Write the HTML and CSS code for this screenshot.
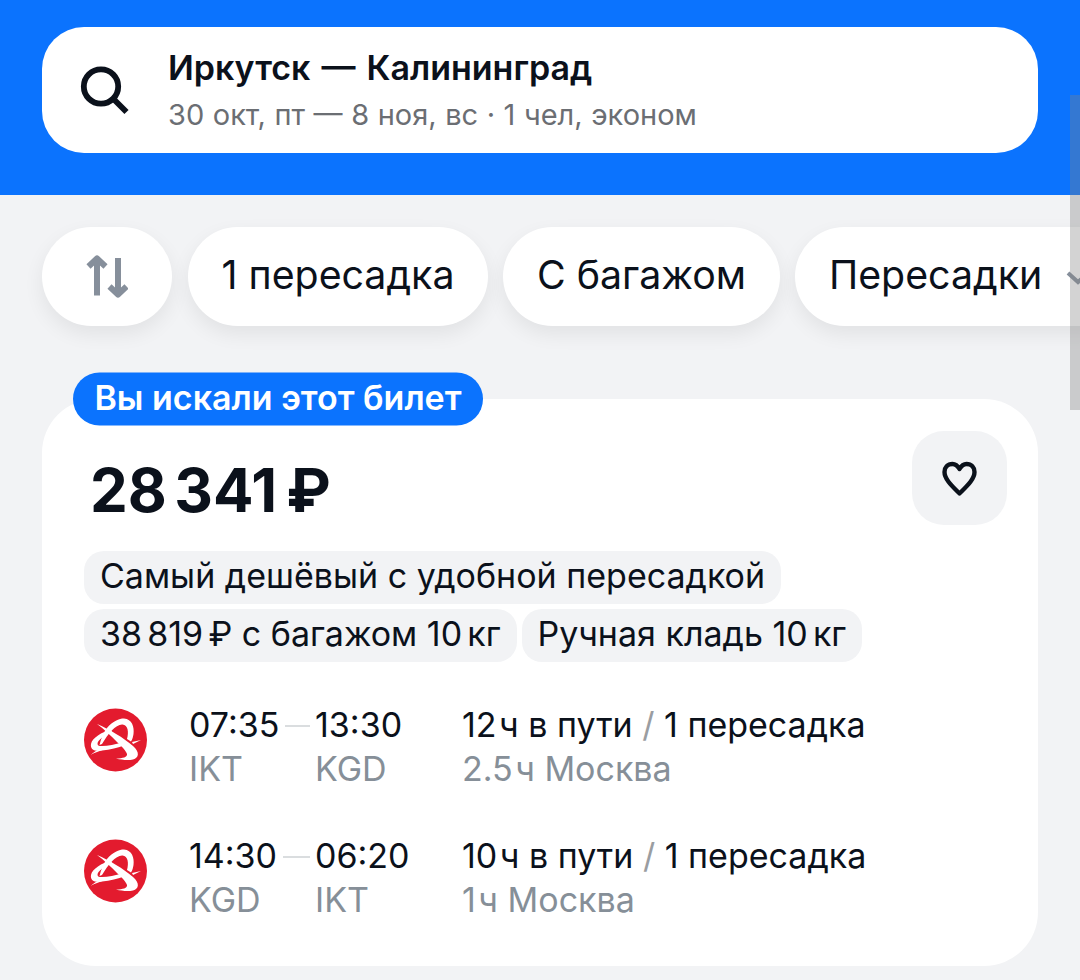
FILE: index.html
```html
<!DOCTYPE html>
<html lang="ru">
<head>
    <meta charset="UTF-8">
    <meta name="viewport" content="width=device-width, initial-scale=1.0">
    <title>Иркутск — Калининград</title>
    <link rel="stylesheet" href="styles.css">
</head>
<body>
    <svg class="sprite" width="0" height="0">
        <symbol id="airline" viewBox="0 0 64 64">
            <circle cx="31.500" cy="32" r="31.500" fill="#e31b2e"/>
            <!-- upper arc -->
            <path fill="#fff" d="M23 20C29 13 35 10.500 40 10.500C48 11 50.500 19 49.500 26C49 29 48.500 31 47 33.500L43 31C45 24 44 17 38.500 16.500C32 16 24 26 18 36L15.500 37C17 31 19 25 23 20Z"/>
            <!-- left loop -->
            <path fill="#fff" d="M27 21.500C18 24 8 30 7 36C6 42 11 43.500 18 42.500C26 41.500 34 40 41 37L38 34.500C31 36.500 22 38.500 16 38C12.500 37.500 13 34 16 31.500C19 28 23 26 28 24.500Z"/>
            <!-- diagonal tail -->
            <path fill="#fff" d="M13 16C25 21 40 30 49 38C56 44 55 50 49 51.500C44 52.500 38 52 32 50.500C39 50.500 43.500 49 43 46C42 43 38 38.500 33 34C27 28 20 21 13 16Z"/>
            <path fill="#fff" d="M6.500 47C10 44 13 42 16 41L20 41.500C15 43 11 44.500 6.500 47ZM48 34L57 32L49 36Z"/>
        </symbol>
    </svg>

    <header class="header">
        <div class="search">
            <svg class="search-icon" width="50" height="50" viewBox="0 0 50 50" fill="none" stroke="#0b111b" stroke-width="5.8">
                <circle cx="21" cy="21.500" r="17.2"/>
                <path d="M33 33.500L46.500 47"/>
            </svg>
            <div class="search-text">
                <div class="route">Иркутск — Калининград</div>
                <div class="dates">30 окт, пт — 8 ноя, вс · 1 чел, эконом</div>
            </div>
        </div>
    </header>

    <div class="filters">
        <button class="filter sort">
            <svg width="42" height="44" viewBox="0 0 42 44" fill="none" stroke="#868f9b" stroke-width="6" stroke-linejoin="round">
                <path d="M11 41.500V4.500M2.500 12.500L11 4.500L19.500 12.500"/>
                <path d="M32 4V40.500M23.500 32.500L32 40.500L40.500 32.500"/>
            </svg>
        </button>
        <button class="filter one-stop">1 пересадка</button>
        <button class="filter baggage">С багажом</button>
        <button class="filter stops">
            <span>Пересадки</span>
            <svg class="chevron" width="24" height="14" viewBox="0 0 24 14" fill="none" stroke="#868f9b" stroke-width="4">
                <path d="M2 2L12 11L22 2"/>
            </svg>
        </button>
    </div>

    <main class="ticket">
        <div class="badge">Вы искали этот билет</div>
        <div class="top">
            <div class="price">28<span class="thin">&#8201;</span>341<span class="currency">₽</span></div>
            <button class="favorite">
                <svg width="36" height="36" viewBox="0 0 36 36" fill="none" stroke="#0b111b" stroke-width="4.4" stroke-linejoin="round">
                    <path d="M17.500 9C15.500 5.500 13 4 10.500 4C5.500 4 2.500 7.500 2.500 12C2.500 19 9.500 25.500 17.500 33.500C25.500 25.500 32.500 19 32.500 12C32.500 7.500 29.500 4 24.500 4C22 4 19.500 5.500 17.500 9Z"/>
                </svg>
            </button>
        </div>
        <div class="tags">
            <span class="tag">Самый дешёвый с удобной пересадкой</span>
            <span class="tag">38<span class="thin">&#8201;</span>819<span class="thin">&#8201;</span>₽ с багажом 10<span class="thin">&#8201;</span>кг</span>
            <span class="tag">Ручная кладь 10<span class="thin">&#8201;</span>кг</span>
        </div>
        <div class="flight">
            <svg class="airline" width="64" height="64"><use href="#airline"/></svg>
            <div class="departure">
                <div class="time">07:35<i class="dash"></i></div>
                <div class="code">IKT</div>
            </div>
            <div class="arrival">
                <div class="time">13:30</div>
                <div class="code">KGD</div>
            </div>
            <div class="details">
                <div class="duration">12<span class="thin">&#8201;</span>ч в пути <span class="slash">/</span> 1 пересадка</div>
                <div class="code">2.5<span class="thin">&#8201;</span>ч Москва</div>
            </div>
        </div>
        <div class="flight">
            <svg class="airline" width="64" height="64"><use href="#airline"/></svg>
            <div class="departure">
                <div class="time">14:30<i class="dash"></i></div>
                <div class="code">KGD</div>
            </div>
            <div class="arrival">
                <div class="time">06:20</div>
                <div class="code">IKT</div>
            </div>
            <div class="details">
                <div class="duration">10<span class="thin">&#8201;</span>ч в пути <span class="slash">/</span> 1 пересадка</div>
                <div class="code">1<span class="thin">&#8201;</span>ч Москва</div>
            </div>
        </div>
    </main>

    <div class="scrollbar"></div>
</body>
</html>
```
FILE: styles.css
```css
* {
    box-sizing: border-box;
}
body {
    margin: 0;
    height: 980px;
    overflow: hidden;
    background-color: #f2f3f5;
    color: #0b111b;
    font-family: Inter, sans-serif;
    font-size: 34px;
    white-space: nowrap;
}
button {
    border: none;
    padding: 0;
    color: inherit;
    font-family: inherit;
}
svg {
    display: block;
    flex-shrink: 0;
}
.sprite {
    position: absolute;
}
.thin {
    letter-spacing: -1px;
}
.header {
    height: 195px;
    padding: 27px 42px 42px;
    background-color: #0b73fe;
}
.search {
    display: flex;
    height: 126px;
    padding: 18px 38px;
    border-radius: 42px;
    background-color: white;
}
.search-icon {
    margin-top: 20px;
}
.search-text {
    margin-left: 38px;
}
.route {
    font-weight: 600;
    line-height: 46px;
    word-spacing: 2.5px;
}
.dates {
    color: #6b6e73;
    font-size: 29px;
    line-height: 48px;
    word-spacing: 0.4px;
}
.filters {
    display: flex;
    gap: 15px;
    padding: 32px 0 30px 42px;
    overflow: hidden;
}
.filter {
    display: flex;
    align-items: center;
    justify-content: center;
    flex-shrink: 0;
    height: 99px;
    padding-bottom: 4px;
    border-radius: 50px;
    background-color: white;
    box-shadow: 0 8px 20px rgba(0, 0, 0, 0.07);
    font-size: 39.3px;
}
.sort {
    width: 130px;
    padding: 0 0 1px;
    margin-right: 1px;
}
.one-stop {
    width: 300px;
}
.baggage {
    width: 277px;
}
.stops {
    justify-content: flex-start;
    gap: 24px;
    width: 340px;
    padding-left: 34px;
}
.chevron {
    margin-top: 6px;
}
.ticket {
    height: 567px;
    margin: 43px 42px 0;
    border-radius: 54px;
    background-color: white;
}
.badge {
    display: flex;
    align-items: center;
    justify-content: center;
    width: 410px;
    height: 53px;
    margin-left: 31px;
    padding-bottom: 4px;
    border-radius: 27px;
    background-color: #0b73fe;
    color: white;
    font-weight: 600;
    transform: translateY(-50%);
}
.top {
    display: flex;
    justify-content: space-between;
    height: 100px;
    margin-top: -21px;
    padding: 0 31px 0 48px;
}
.price {
    font-size: 60px;
    font-weight: 700;
    line-height: 119px;
}
.price .thin {
    letter-spacing: -2px;
}
.currency {
    margin-left: 9px;
}
.favorite {
    display: flex;
    align-items: center;
    justify-content: center;
    width: 95px;
    height: 94px;
    border-radius: 32px;
    background-color: #f2f3f5;
}
.tags {
    display: flex;
    flex-wrap: wrap;
    gap: 5px;
    margin: 20px 42px 0;
}
.tag {
    height: 53px;
    padding: 0 16px;
    border-radius: 20px;
    background-color: #f2f3f5;
    line-height: 50px;
}
.flight {
    display: flex;
    height: 88px;
    margin: 41px 0 43px 42px;
    line-height: 44px;
}
.airline {
    margin-top: 5px;
}
.departure {
    width: 126px;
    margin-left: 41px;
}
.arrival {
    width: 147px;
}
.departure .time {
    display: flex;
    align-items: center;
}
.dash {
    flex: 1;
    height: 2px;
    margin: 2px 5px 0 6px;
    background-color: #dadddf;
}
.code {
    color: #868f98;
}
.details .thin {
    letter-spacing: -3.7px;
}
.slash {
    color: #9a9da1;
}
.scrollbar {
    position: absolute;
    top: 95px;
    right: 0;
    width: 10px;
    height: 315px;
    background-color: rgba(130, 130, 130, 0.35);
}
```
